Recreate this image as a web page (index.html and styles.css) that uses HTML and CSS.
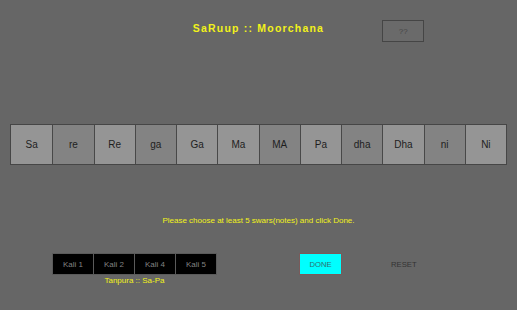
FILE: index.html
```html
<!DOCTYPE html>
<html>
<head>
<meta charset="utf-8">
<link rel="stylesheet" href="styles.css">
</head>
<body>
<div class="page">
  <header class="header">
    <div></div>
    <h1 class="title">SaRuup :: Moorchana</h1>
    <div class="help-cell"><button class="help">??</button></div>
  </header>
  <div class="keys">
    <div class="key light">Sa</div>
    <div class="key dark">re</div>
    <div class="key light">Re</div>
    <div class="key dark">ga</div>
    <div class="key light">Ga</div>
    <div class="key light">Ma</div>
    <div class="key dark">MA</div>
    <div class="key light">Pa</div>
    <div class="key dark">dha</div>
    <div class="key light">Dha</div>
    <div class="key dark">ni</div>
    <div class="key light">Ni</div>
  </div>
  <p class="message">Please choose at least 5 swars(notes) and click Done.</p>
  <div class="controls">
    <div class="kali-group">
      <div class="kalis">
        <button class="kali">Kali 1</button>
        <button class="kali">Kali 2</button>
        <button class="kali">Kali 4</button>
        <button class="kali">Kali 5</button>
      </div>
      <div class="tanpura">Tanpura :: Sa-Pa</div>
    </div>
    <button class="done">DONE</button>
    <button class="reset">RESET</button>
  </div>
</div>
</body>
</html>
```

FILE: styles.css
```css
html, body {
  margin: 0;
  padding: 0;
  background: #666666;
  font-family: "Liberation Sans", Arial, sans-serif;
}
.page {
  width: 517px;
  height: 310px;
  display: flex;
  flex-direction: column;
  box-sizing: border-box;
}
.header {
  display: grid;
  grid-template-columns: 1fr auto 1fr;
  align-items: start;
  padding-top: 20px;
  height: 22px;
}
.title {
  margin: 2px 0 0 0;
  color: #f2f21a;
  font-size: 10.5px;
  font-weight: bold;
  letter-spacing: 1.2px;
  line-height: 12px;
}
.help-cell {
  display: flex;
}
.help {
  margin-left: 58px;
  width: 42px;
  height: 22px;
  box-sizing: border-box;
  background: #6a6a6a;
  border: 1px solid #454545;
  color: #474747;
  font-family: "Liberation Sans", Arial, sans-serif;
  font-size: 8px;
  padding: 0;
}
.keys {
  margin: 82px 0 0 10px;
  width: 497px;
  height: 41px;
  display: grid;
  grid-template-columns: repeat(12, 1fr);
  border: 1px solid #464646;
  box-sizing: border-box;
}
.key {
  display: flex;
  align-items: center;
  justify-content: center;
  font-size: 10px;
  color: #1e1e1e;
  border-left: 1px solid #484848;
}
.key:first-child { border-left: none; }
.light { background: #959595; }
.dark { background: #838383; }
.message {
  margin: 51px 0 0 0;
  text-align: center;
  color: #f2f21a;
  font-size: 8px;
  line-height: 10px;
}
.controls {
  display: flex;
  align-items: flex-start;
  margin-top: 27px;
  padding-left: 52px;
}
.kali-group {
  display: flex;
  flex-direction: column;
  align-items: center;
}
.kalis {
  display: flex;
}
.kali {
  width: 42px;
  height: 22px;
  box-sizing: border-box;
  background: #000;
  border: 1px solid #5a5a5a;
  margin-left: -1px;
  color: #828282;
  font-family: "Liberation Sans", Arial, sans-serif;
  font-size: 8px;
  padding: 0;
}
.kali:first-child { margin-left: 0; }
.tanpura {
  margin-top: 1px;
  color: #f2f21a;
  font-size: 8px;
  line-height: 10px;
}
.done {
  margin-left: 82px;
  width: 43px;
  height: 22px;
  box-sizing: border-box;
  background: #00ffff;
  border: 1px solid #7a5a5a;
  color: #2f7070;
  font-family: "Liberation Sans", Arial, sans-serif;
  font-size: 7.7px;
  padding: 0;
}
.reset {
  margin-left: 45px;
  height: 22px;
  background: none;
  border: none;
  color: #333;
  font-family: "Liberation Sans", Arial, sans-serif;
  font-size: 7.7px;
  padding: 0 4px;
}
```
